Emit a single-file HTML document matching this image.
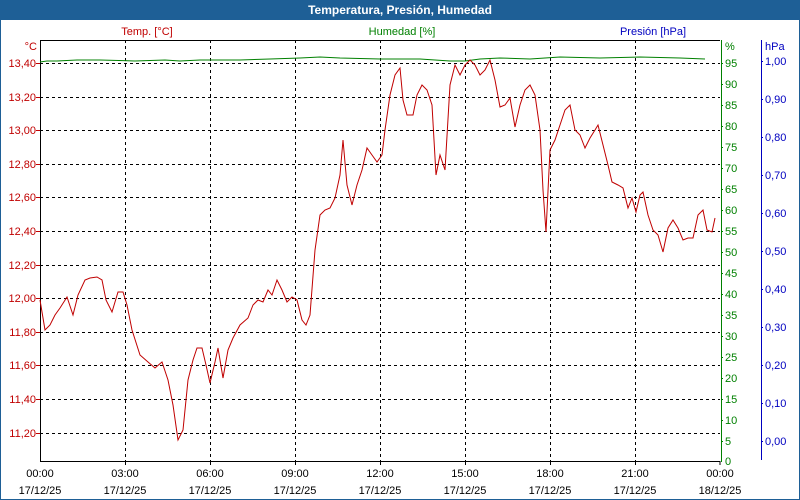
<!DOCTYPE html><html><head><style>
body{margin:0;width:800px;height:500px;overflow:hidden;background:#fff;font-family:"Liberation Sans",sans-serif;font-size:11px}
#wrap{position:absolute;left:0;top:0;width:798px;height:498px;border:1px solid #1e5f96;background:#fff}
#title{position:absolute;left:0;top:0;width:800px;height:20px;background:#1e5f96;color:#fff;font-weight:bold;font-size:12px;text-align:center;line-height:20px}
</style></head><body><div id="wrap"></div><div id="title">Temperatura, Presión, Humedad</div>
<svg width="800" height="500" style="position:absolute;left:0;top:0" font-family="Liberation Sans, sans-serif" font-size="11">
<g stroke="#000" stroke-dasharray="3,3" stroke-width="1">
<path d="M40 63.5H720M40 97.5H720M40 130.5H720M40 164.5H720M40 197.5H720M40 231.5H720M40 265.5H720M40 298.5H720M40 332.5H720M40 365.5H720M40 399.5H720M40 433.5H720"/>
<path d="M125.5 40V461M210.5 40V461M295.5 40V461M380.5 40V461M465.5 40V461M550.5 40V461M635.5 40V461"/>
</g>
<path d="M40.5 40V461.5H720M40 40.5H720" stroke="#000" fill="none"/>
<path d="M125.5 461v4M210.5 461v4M295.5 461v4M380.5 461v4M465.5 461v4M550.5 461v4M635.5 461v4M720 461v4" stroke="#000"/>
<g stroke="#c00000"><path d="M36 63.5h4M36 97.5h4M36 130.5h4M36 164.5h4M36 197.5h4M36 231.5h4M36 265.5h4M36 298.5h4M36 332.5h4M36 365.5h4M36 399.5h4M36 433.5h4"/></g>
<g fill="#c00000" text-anchor="end"><text x="37" y="50">°C</text><text x="36" y="67">13,40</text><text x="36" y="101">13,20</text><text x="36" y="134">13,00</text><text x="36" y="168">12,80</text><text x="36" y="201">12,60</text><text x="36" y="235">12,40</text><text x="36" y="269">12,20</text><text x="36" y="302">12,00</text><text x="36" y="336">11,80</text><text x="36" y="369">11,60</text><text x="36" y="403">11,40</text><text x="36" y="437">11,20</text></g>
<text x="147" y="35" fill="#c00000" text-anchor="middle">Temp. [°C]</text>
<text x="402" y="35" fill="#008000" text-anchor="middle">Humedad [%]</text>
<text x="653" y="35" fill="#0000c0" text-anchor="middle">Presión [hPa]</text>
<path d="M721.5 40V462" stroke="#008000"/>
<g fill="#008000"><text x="725" y="50">%</text>
<text x="725" y="67">95</text><text x="725" y="88">90</text><text x="725" y="109">85</text><text x="725" y="130">80</text><text x="725" y="151">75</text><text x="725" y="172">70</text><text x="725" y="193">65</text><text x="725" y="214">60</text><text x="725" y="235">55</text><text x="725" y="256">50</text><text x="725" y="277">45</text><text x="725" y="298">40</text><text x="725" y="319">35</text><text x="725" y="340">30</text><text x="725" y="361">25</text><text x="725" y="382">20</text><text x="725" y="403">15</text><text x="725" y="424">10</text><text x="725" y="445">5</text><text x="725" y="465">0</text></g>
<path d="M721 63.5h2M721 84.5h2M721 105.5h2M721 126.5h2M721 147.5h2M721 168.5h2M721 189.5h2M721 210.5h2M721 231.5h2M721 252.5h2M721 273.5h2M721 294.5h2M721 315.5h2M721 336.5h2M721 357.5h2M721 378.5h2M721 399.5h2M721 420.5h2M721 441.5h2" stroke="#008000"/>
<path d="M761.5 40V460" stroke="#0000c0"/>
<path d="M761 61.5h2M761 99.5h2M761 137.5h2M761 175.5h2M761 213.5h2M761 251.5h2M761 289.5h2M761 327.5h2M761 365.5h2M761 403.5h2M761 441.5h2" stroke="#0000c0"/>
<g fill="#0000c0"><text x="765" y="50">hPa</text><text x="765" y="65">1,00</text><text x="765" y="103">0,90</text><text x="765" y="141">0,80</text><text x="765" y="179">0,70</text><text x="765" y="217">0,60</text><text x="765" y="255">0,50</text><text x="765" y="293">0,40</text><text x="765" y="331">0,30</text><text x="765" y="369">0,20</text><text x="765" y="407">0,10</text><text x="765" y="445">0,00</text></g>
<polyline fill="none" stroke="#008000" points="40,62 47,61 57,61 77,60 100,60 135,61 165,60 180,61 200,60 240,60 270,59 300,58 320,57 340,58 380,59 420,59 450,61 465,61 480,59 500,58 530,59 560,57 600,58 640,57 680,58 705,59"/>
<polyline fill="none" stroke="#c00000" points="40,300 45,330 50,325 55,315 60,308 67,297 73,315 78,295 85,280 90,278 97,277 102,280 106,300 112,312 118,292 123,292 127,305 132,330 140,355 148,362 155,368 162,362 168,380 173,405 178,440 183,430 188,380 193,360 197,348 202,348 206,365 210,383 215,362 218,348 223,378 228,350 233,338 240,325 248,318 253,305 258,300 263,302 268,290 272,295 277,280 282,290 287,302 292,297 297,300 302,320 306,325 310,315 315,250 320,215 325,210 330,208 335,198 340,175 343,140 347,185 352,205 357,185 362,170 367,148 372,155 377,162 382,155 385,130 390,95 395,75 400,68 403,100 407,115 413,115 417,95 422,85 427,90 432,105 436,175 440,155 445,170 450,85 455,65 460,75 465,65 470,60 475,65 480,75 485,70 490,60 495,80 500,107 505,105 510,98 515,127 520,105 525,90 530,85 535,95 540,130 543,190 546,232 550,150 555,140 560,125 565,110 570,105 575,130 580,135 585,148 590,138 595,130 598,125 603,145 608,165 612,182 618,185 623,188 628,208 632,198 636,212 640,195 643,192 648,215 653,230 658,235 663,252 668,228 673,220 678,228 683,240 688,238 693,238 698,215 703,210 707,230 712,232 715,218"/>
<g fill="#000" text-anchor="middle"><text x="40" y="477">00:00</text><text x="40" y="494">17/12/25</text><text x="125" y="477">03:00</text><text x="125" y="494">17/12/25</text><text x="210" y="477">06:00</text><text x="210" y="494">17/12/25</text><text x="295" y="477">09:00</text><text x="295" y="494">17/12/25</text><text x="380" y="477">12:00</text><text x="380" y="494">17/12/25</text><text x="465" y="477">15:00</text><text x="465" y="494">17/12/25</text><text x="550" y="477">18:00</text><text x="550" y="494">17/12/25</text><text x="635" y="477">21:00</text><text x="635" y="494">17/12/25</text><text x="720" y="477">00:00</text><text x="720" y="494">18/12/25</text></g>
</svg></body></html>
